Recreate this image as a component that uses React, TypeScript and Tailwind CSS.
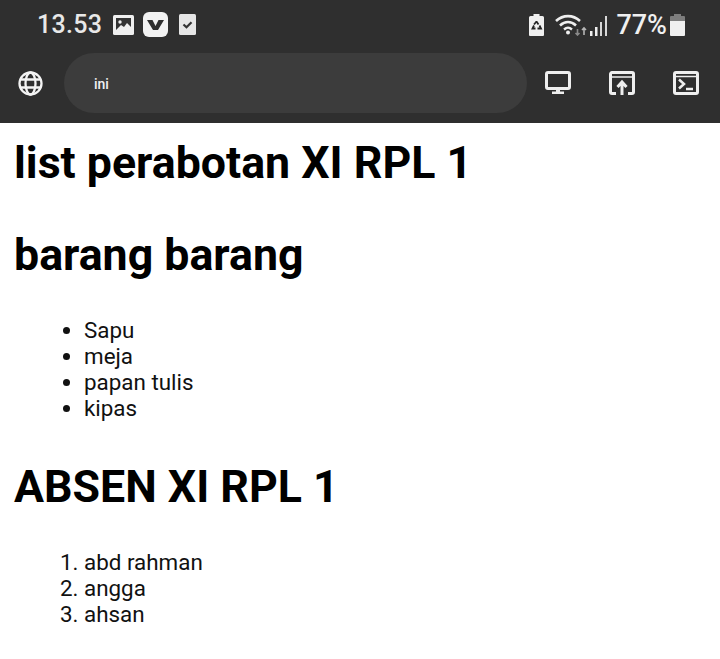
const StatusLeft = () => (
  <div className="flex items-center">
    <span className="text-[25px] leading-[30px] font-medium text-[#e8e8e8] tracking-[0.3px]">13.53</span>
    <svg className="ml-[11px]" width="21" height="20" viewBox="0 0 21 20">
      <rect x="0" y="0" width="21" height="20" rx="1.5" fill="#efefef" />
      <rect x="3" y="3" width="15" height="12" fill="#333" />
      <circle cx="7" cy="7" r="1.7" fill="#efefef" />
      <path d="M3 15l5-5 3 2 3-4 4 4v3z" fill="#efefef" />
    </svg>
    <svg className="ml-[9px]" width="25" height="25" viewBox="0 0 25 25">
      <rect width="25" height="25" rx="6" fill="#f2f2f2" />
      <path d="M4 8h5.500l3 6 3-6H21l-6 10h-5z" fill="#2f2f2f" />
    </svg>
    <svg className="ml-[11px]" width="17" height="21" viewBox="0 0 17 21">
      <rect width="17" height="21" rx="1.5" fill="#e6e6e6" />
      <path d="M4.500 10.500l3 2.800 5-5" fill="none" stroke="#333" strokeWidth="2.200" />
    </svg>
  </div>
);

const StatusRight = () => (
  <div className="flex items-center">
    <svg width="15" height="22" viewBox="0 0 15 22">
      <path d="M4.500 0h6v2h3a1.500 1.500 0 0 1 1.500 1.500V21a1 1 0 0 1-1 1H1a1 1 0 0 1-1-1V3.500A1.500 1.500 0 0 1 1.500 2h3z" fill="#efefef" />
      <path d="M7.500 7.500l2 3M5 11.500l-1.500 3h3M10.500 11.500l1.500 3H8.500M5 10.500l2.500-3" fill="none" stroke="#222" strokeWidth="1.800" />
    </svg>
    <svg className="ml-[11px]" width="34" height="22" viewBox="0 0 34 22">
      <path d="M1 7C8 .5 18 .5 25 7" fill="none" stroke="#efefef" strokeWidth="2.600" />
      <path d="M5 11.500C10 7 16 7 21 11.500" fill="none" stroke="#efefef" strokeWidth="2.600" />
      <path d="M9 15.500c3-2.500 5-2.500 8 0" fill="none" stroke="#efefef" strokeWidth="2.400" />
      <circle cx="13" cy="18.500" r="2" fill="#efefef" />
      <path d="M22.500 15v6M20.500 19l2 2 2-2" fill="none" stroke="#8a8a8a" strokeWidth="1.600" />
      <path d="M29 21v-7M27 16l2-2 2 2" fill="none" stroke="#b5b5b5" strokeWidth="1.600" />
    </svg>
    <svg className="ml-[1px]" width="18" height="22" viewBox="0 0 18 22">
      <rect x="0" y="17" width="2.500" height="5" fill="#efefef" />
      <rect x="5" y="13" width="2.500" height="9" fill="#efefef" />
      <rect x="10" y="8" width="2" height="14" fill="#d8d8d8" />
      <rect x="15" y="2" width="2" height="20" fill="#d8d8d8" />
    </svg>
    <span className="ml-[8px] text-[27px] leading-[30px] font-medium text-[#f0f0f0]">77%</span>
    <svg className="ml-[3px]" width="15" height="22" viewBox="0 0 15 22">
      <path d="M4 0h7v2h3a1 1 0 0 1 1 1v5H0V3a1 1 0 0 1 1-1h3z" fill="#7d7d7d" />
      <path d="M0 7h15v14a1 1 0 0 1-1 1H1a1 1 0 0 1-1-1z" fill="#f0f0f0" />
    </svg>
  </div>
);

const GlobeIcon = () => (
  <svg width="25" height="25" viewBox="0 0 25 25" fill="none" stroke="#f4f4f4" strokeWidth="2.300">
    <circle cx="12.500" cy="12.500" r="11" />
    <ellipse cx="12.500" cy="12.500" rx="5" ry="11" />
    <path d="M2.500 8.500h20M2.500 16.500h20" />
  </svg>
);

const Toolbar = () => (
  <div className="flex items-center mt-[12px] h-[60px]">
    <div className="w-[64px] flex justify-center pr-[3px]">
      <GlobeIcon />
    </div>
    <div className="w-[463px] h-[60px] rounded-[30px] bg-[#3c3c3c] flex items-center pl-[30px] pt-[2px] text-[14px] font-medium text-[#f0f0f0]">ini</div>
    <div className="flex items-center ml-[18px] gap-[38px]">
      <svg width="26" height="24" viewBox="0 0 26 24">
        <rect x="1.500" y="1.500" width="23" height="16" rx="1.500" fill="none" stroke="#efefef" strokeWidth="3" />
        <path d="M11 18h4v2.500h4V23H7v-2.500h4z" fill="#efefef" />
      </svg>
      <svg width="26" height="24" viewBox="0 0 26 24">
        <path d="M7 22.500H3A1.500 1.500 0 0 1 1.500 21V3A1.500 1.500 0 0 1 3 1.500h20A1.500 1.500 0 0 1 24.500 3v18a1.500 1.500 0 0 1-1.500 1.500h-4" fill="none" stroke="#efefef" strokeWidth="3" />
        <path d="M1.500 6h23" stroke="#efefef" strokeWidth="1.500" />
        <path d="M13 24V12M8.500 16l4.500-5 4.500 5" fill="none" stroke="#efefef" strokeWidth="3" />
      </svg>
      <svg width="26" height="24" viewBox="0 0 26 24">
        <rect x="1.500" y="1.500" width="23" height="21" rx="1.500" fill="none" stroke="#efefef" strokeWidth="3" />
        <path d="M1.500 5.500h23" stroke="#efefef" strokeWidth="1.500" />
        <path d="M6 8.500l5 4.500-5 4.500" fill="none" stroke="#efefef" strokeWidth="2.500" />
        <path d="M13 18h7" stroke="#efefef" strokeWidth="2.500" />
      </svg>
    </div>
  </div>
);

export default function App() {
  return (
    <div className="w-[720px] h-[659px] bg-white overflow-hidden font-['Roboto',sans-serif] text-black">
      <div className="h-[123px] bg-[#2f2f2f] pt-[8px]">
        <div className="flex items-center justify-between h-[33px] pl-[37px] pr-[35px]">
          <StatusLeft />
          <StatusRight />
        </div>
        <Toolbar />
      </div>

      <div className="px-[14px]">
        <h1 className="text-[44.7px] leading-[52px] font-bold mt-[14px]">list perabotan XI RPL 1</h1>
        <h1 className="text-[44.7px] leading-[52px] font-bold mt-[40px]">barang barang</h1>
        <ul className="list-disc pl-[70px] mt-[36px] text-[22.4px] leading-[26px] text-[#111]">
          <li>Sapu</li>
          <li>meja</li>
          <li>papan tulis</li>
          <li>kipas</li>
        </ul>
        <h1 className="text-[44.7px] leading-[52px] font-bold mt-[40px]">ABSEN XI RPL 1</h1>
        <ol className="list-decimal pl-[70px] mt-[36px] text-[22.4px] leading-[26px] text-[#111]">
          <li>abd rahman</li>
          <li>angga</li>
          <li>ahsan</li>
        </ol>
      </div>
    </div>
  );
}
